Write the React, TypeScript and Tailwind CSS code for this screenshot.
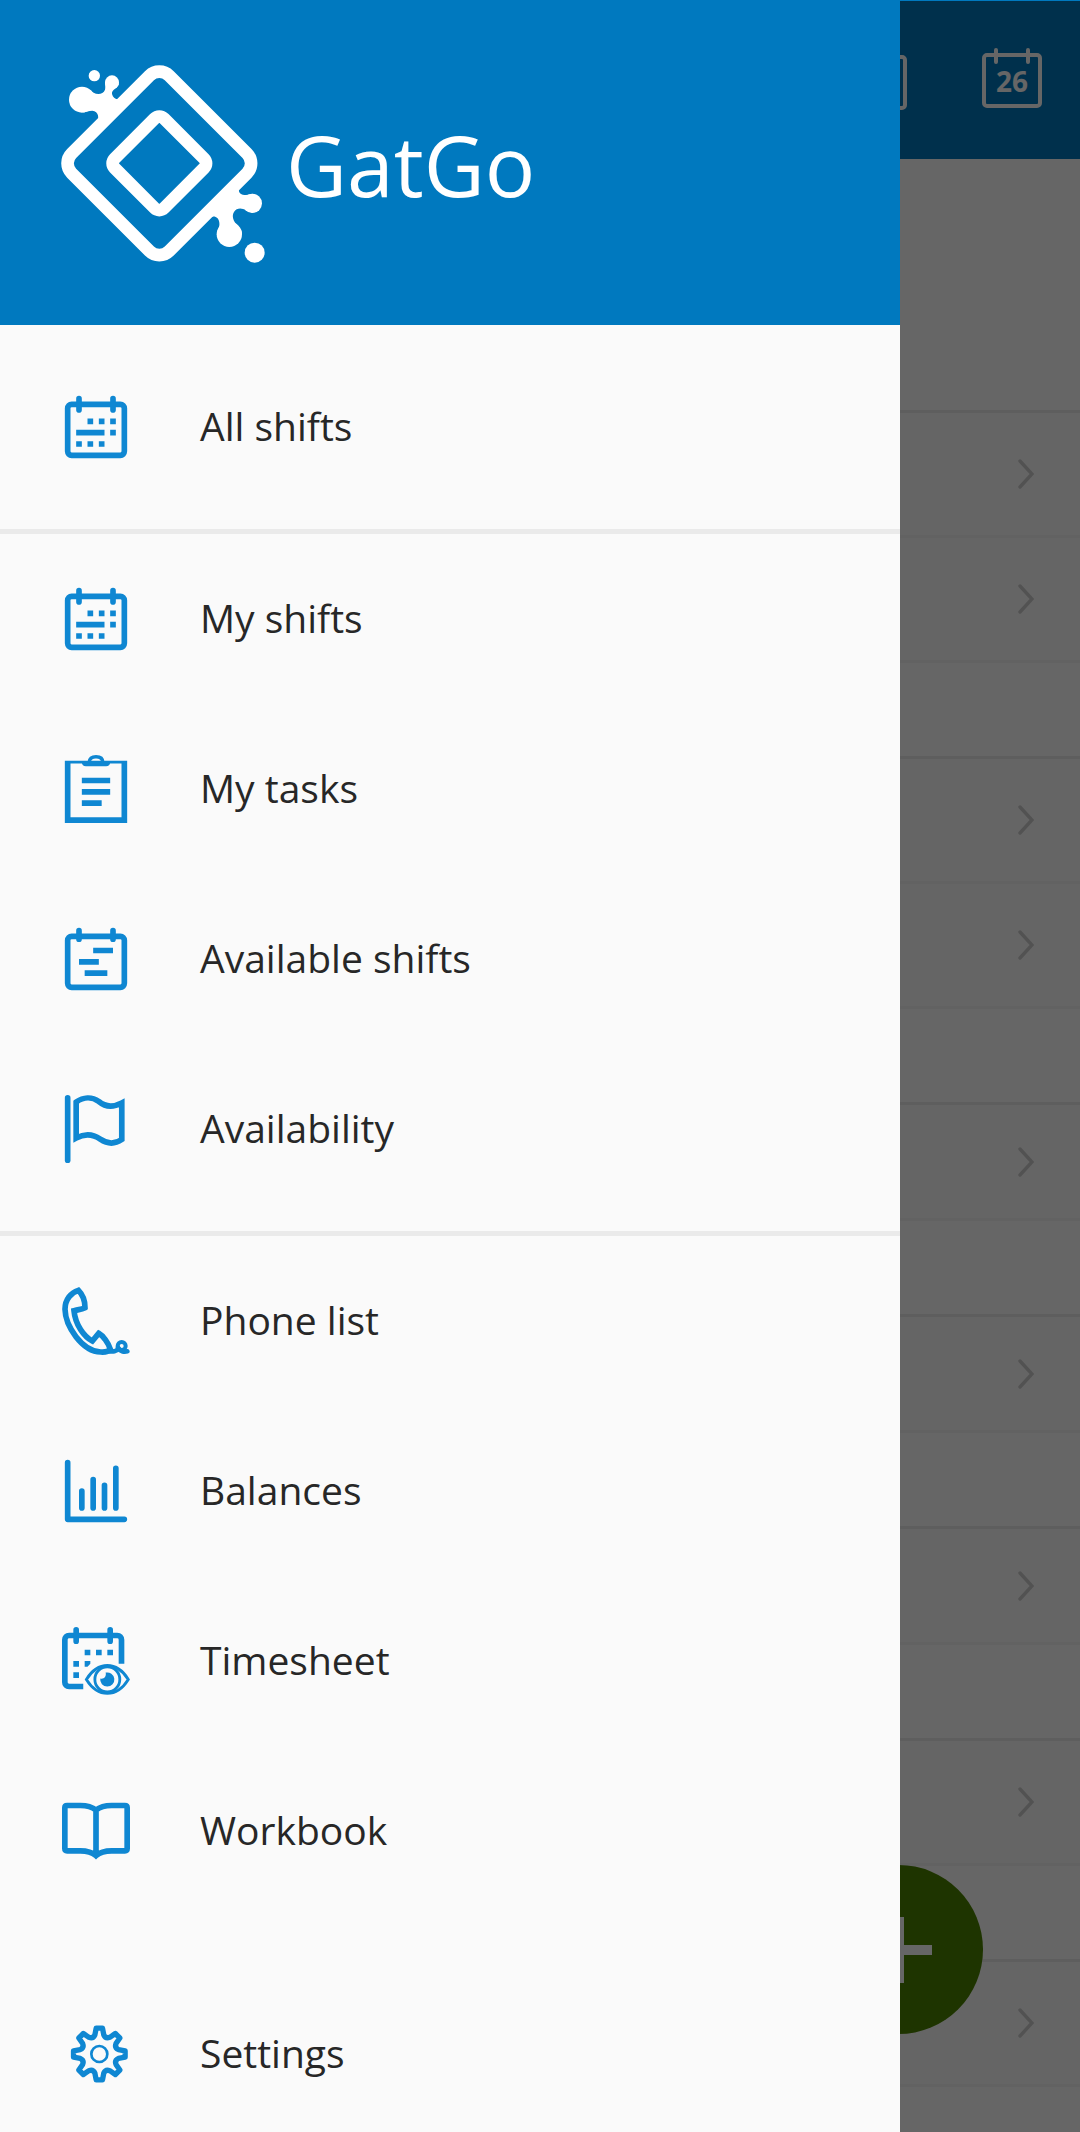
import React from 'react';
import clsx from 'clsx';

interface IconProps {
  className?: string;
}

interface MenuItem {
  label: string;
  icon: (props: IconProps) => React.ReactElement;
}

interface DaySection {
  id: number;
  rows: number;
  tall: boolean;
}

const stroke = {
  fill: 'none',
  stroke: 'currentColor',
  strokeWidth: 2,
};

function CalendarIcon({ className }: IconProps) {
  return (
    <svg viewBox="0 0 24 24" className={className} aria-hidden="true">
      <rect x="2" y="4" width="20" height="18" rx="1.4" {...stroke} />
      <path d="M6 2v4M18 2v4" {...stroke} strokeLinecap="round" />
      <path
        d="M9 9h2v2H9zM13 9h2v2h-2zM17 9h2v2h-2zM5 13h10v2H5zM17 13h2v2h-2zM5 17h2v2H5zM9 17h2v2H9zM13 17h2v2h-2z"
        fill="currentColor"
      />
    </svg>
  );
}

function TasksIcon({ className }: IconProps) {
  return (
    <svg viewBox="0 0 24 24" className={className} aria-hidden="true">
      <path d="M1 2h22v22H1zM3 3v19h18V3z" fill="currentColor" fillRule="evenodd" />
      <path d="M7 2.6h10c0 .9-.6 1.4-1.4 1.4H8.400C7.600 4 7 3.500 7 2.600z" fill="currentColor" />
      <path d="M9.600 2.600C9.600 1.200 10.500 .6 12 .6s2.400.6 2.400 2" {...stroke} strokeWidth={1.2} />
      <path d="M7 8h10v2H7zM7 12h10v2H7zM7 16h7v2H7z" fill="currentColor" />
    </svg>
  );
}

function AvailableIcon({ className }: IconProps) {
  return (
    <svg viewBox="0 0 24 24" className={className} aria-hidden="true">
      <rect x="2" y="4" width="20" height="18" rx="1.4" {...stroke} />
      <path d="M6 2v3M18 2v3" {...stroke} strokeLinecap="round" />
      <path d="M11 8h7v2h-7zM6 12h7v2H6zM8 16h8v2H8z" fill="currentColor" />
    </svg>
  );
}

function FlagIcon({ className }: IconProps) {
  return (
    <svg viewBox="0 0 24 24" className={className} aria-hidden="true">
      <path d="M2 1v22" {...stroke} strokeLinecap="round" />
      <path
        d="M5 2.500C7.500.7 10.500.5 13 2.300 15.500 4.400 18 4.400 21.100 2.800V15.700C18.500 17.500 16 17.300 13.500 15.600 10.800 13.700 8 13.600 5 15.200z"
        {...stroke}
      />
    </svg>
  );
}

function PhoneIcon({ className }: IconProps) {
  return (
    <svg viewBox="18 21 204 204" className={className} aria-hidden="true">
      <path
        d="M67 31C45 38 27 58 27 88C28 138 78 214 134 216C148 217 158 214 163 208C157 188 142 168 128 160L109 183C84 170 58 134 54 92C66 89 78 88 87 83C87 64 80 44 67 31z"
        {...stroke}
        strokeWidth={17}
      />
      <path d="M158 213C170 217 182 213 188 206" {...stroke} strokeWidth={14} />
      <circle cx="197" cy="198" r="12" {...stroke} strokeWidth={12} />
      <path d="M186 203C192 214 204 217 214 214" {...stroke} strokeWidth={14} strokeLinecap="round" />
    </svg>
  );
}

function BalancesIcon({ className }: IconProps) {
  return (
    <svg viewBox="0 0 24 24" className={className} aria-hidden="true">
      <path
        d="M2 2v20h20M7 12v6M11 8v10M15 10v8M19 4v14"
        {...stroke}
        strokeLinecap="round"
        strokeLinejoin="round"
      />
    </svg>
  );
}

function TimesheetIcon({ className }: IconProps) {
  return (
    <svg viewBox="0 0 24 24" className={className} aria-hidden="true">
      <path d="M7.500 21H2.500C1.600 21 1 20.400 1 19.500V4.500C1 3.600 1.600 3 2.500 3h17c.9 0 1.500.6 1.500 1.500V13" {...stroke} />
      <path d="M5 1v4M17 1v4" {...stroke} strokeLinecap="round" />
      <path
        d="M8 8h2v2H8zM12 8h2v2h-2zM16 8h2v2h-2zM4 12h2v2H4zM8 12h2v1l-1 1H8zM4 16h2v2H4z"
        fill="currentColor"
      />
      <path d="M8.600 18.500C10.400 15.600 12.900 13.600 16 13.600s5.600 2 7.400 4.900c-1.800 2.900-4.300 4.900-7.400 4.900s-5.600-2-7.400-4.900z" {...stroke} strokeWidth={1} />
      <circle cx="16" cy="18.500" r="4.400" {...stroke} strokeWidth={1} />
      <path d="M15.400 16.100A2.500 2.500 0 1 1 13.500 18.200C14.600 18.600 15.800 17.600 15.400 16.100z" fill="currentColor" />
    </svg>
  );
}

function WorkbookIcon({ className }: IconProps) {
  return (
    <svg viewBox="0 0 24 24" className={className} aria-hidden="true">
      <path
        d="M12 4.600C10.500 3.400 9 3 6.500 3H1.800C1.300 3 1 3.300 1 3.800V18.200C1 18.700 1.300 19 1.800 19H6.500C9 19 10.500 19.400 12 20.700C13.500 19.400 15 19 17.500 19H22.200C22.700 19 23 18.700 23 18.200V3.800C23 3.300 22.700 3 22.200 3H17.500C15 3 13.500 3.400 12 4.600zM12 4.600V20.700"
        {...stroke}
      />
    </svg>
  );
}

function gearPoint(degrees: number, radius: number) {
  const angle = (degrees * Math.PI) / 180;
  return `${(130 + radius * Math.sin(angle)).toFixed(1)} ${(116 - radius * Math.cos(angle)).toFixed(1)}`;
}

// Eight teeth with a curved valley after each one
const gearPath = Array.from({ length: 8 })
  .map((_, i) => {
    const a = i * 45;
    return [
      `${i === 0 ? 'M' : 'L'}${gearPoint(a - 13, 59)}`,
      `L${gearPoint(a - 7, 78)}`,
      `L${gearPoint(a + 7, 78)}`,
      `L${gearPoint(a + 13, 59)}`,
      `Q${gearPoint(a + 22.5, 49)} ${gearPoint(a + 32, 59)}`,
    ].join('');
  })
  .join('') + 'z';

function SettingsIcon({ className }: IconProps) {
  return (
    <svg viewBox="18 14 204 204" className={className} aria-hidden="true">
      <path d={gearPath} {...stroke} strokeWidth={16} strokeLinejoin="round" />
      <circle cx="130" cy="116" r="24" {...stroke} strokeWidth={8} />
    </svg>
  );
}

function Logo({ className }: IconProps) {
  return (
    <svg viewBox="60 60 630 630" className={className} aria-hidden="true">
      <g {...stroke} strokeWidth={38}>
        <rect x="151" y="163" width="414" height="414" rx="42" transform="rotate(45 358 370)" />
        <rect x="253" y="265" width="210" height="210" rx="20" transform="rotate(45 358 370)" />
      </g>
      <g fill="currentColor">
        <circle cx="163" cy="107" r="17" />
        <circle cx="216" cy="127" r="21" />
        <circle cx="126" cy="179" r="39" />
        <path d="M150 149C160 164 188 168 195 149C197 141 195 136 195 128L237 130C236 145 214 148 216 162C220 178 234 182 244 172L262 172L180 260L168 250C180 238 176 212 157 212C145 212 140 215 130 218z" />
        <circle cx="637" cy="490" r="29" />
        <circle cx="644" cy="638" r="30" />
        <circle cx="568" cy="583" r="38" />
        <path d="M615 423C595 442 592 455 603 462C612 468 620 464 637 461L637 519C620 512 605 500 590 508C576 518 576 532 584 546C592 560 606 565 606 583L531 583C531 570 540 562 538 548C536 530 520 524 504 536L480 520L590 410z" />
      </g>
    </svg>
  );
}

const menuGroups: MenuItem[][] = [
  [{ label: 'All shifts', icon: CalendarIcon }],
  [
    { label: 'My shifts', icon: CalendarIcon },
    { label: 'My tasks', icon: TasksIcon },
    { label: 'Available shifts', icon: AvailableIcon },
    { label: 'Availability', icon: FlagIcon },
  ],
  [
    { label: 'Phone list', icon: PhoneIcon },
    { label: 'Balances', icon: BalancesIcon },
    { label: 'Timesheet', icon: TimesheetIcon },
    { label: 'Workbook', icon: WorkbookIcon },
  ],
];

const daySections: DaySection[] = [
  { id: 1, rows: 2, tall: true },
  { id: 2, rows: 2, tall: true },
  { id: 3, rows: 1, tall: false },
  { id: 4, rows: 1, tall: false },
  { id: 5, rows: 1, tall: false },
  { id: 6, rows: 1, tall: true },
  { id: 7, rows: 1, tall: true },
];

function MenuLink({ label, icon: Icon }: MenuItem) {
  return (
    <a href="#" className="flex h-[170px] items-center gap-[70px] px-[62px]">
      <Icon className="h-[68px] w-[68px] shrink-0 text-[#0f87d2]" />
      <span className="pb-0.5 text-[39px] leading-[54px] text-[#272727]">{label}</span>
    </a>
  );
}

function Drawer() {
  return (
    <aside className="absolute inset-y-0 left-0 flex w-5/6 flex-col overflow-hidden bg-[#fafafa]">
      <header className="flex h-[325px] shrink-0 items-center gap-4 bg-[#0079bf] px-[60px] pt-1 text-white">
        <Logo className="h-[210px] w-[210px] shrink-0" />
        <h1 className="text-[84px] leading-[112px]">GatGo</h1>
      </header>

      <nav className="flex grow flex-col">
        {menuGroups.map((group, index) => (
          <div
            key={group[0].label}
            className={clsx(
              index === 0 && 'pt-[17px]',
              index < menuGroups.length - 1 && 'border-b-[5px] border-[#eaeaea] pb-[17px]'
            )}
          >
            {group.map(item => (
              <MenuLink key={item.label} {...item} />
            ))}
          </div>
        ))}
        <a href="#" className="mt-auto flex h-[156px] items-center gap-[70px] px-[62px]">
          <SettingsIcon className="h-[68px] w-[68px] shrink-0 text-[#0f87d2]" />
          <span className="pb-0.5 text-[39px] leading-[54px] text-[#272727]">Settings</span>
        </a>
      </nav>
    </aside>
  );
}

function ShiftsPage() {
  return (
    <main>
      {/* App bar */}
      <div className="flex h-[159px] items-center justify-end gap-[75px] bg-[#0079bf] pr-[38px] pb-1 text-white">
        <button type="button" aria-label="View" className="pt-1">
          <svg viewBox="0 0 60 60" className="h-[60px] w-[60px]" aria-hidden="true">
            <rect x="2" y="7" width="56" height="51" rx="3" {...stroke} strokeWidth={4} />
          </svg>
        </button>
        <button type="button" aria-label="Today" className="relative">
          <svg viewBox="0 0 60 60" className="h-[60px] w-[60px]" aria-hidden="true">
            <rect x="2" y="7" width="56" height="51" rx="3" {...stroke} strokeWidth={4} />
            <path d="M14 2v12M46 2v12" {...stroke} strokeWidth={4} strokeLinecap="round" />
          </svg>
          <span className="absolute inset-x-0 bottom-[5px] text-center text-[28px] leading-[44px] font-bold">26</span>
        </button>
      </div>

      <div className="h-[251px] bg-white" />

      {daySections.map(section => (
        <section key={section.id}>
          {Array.from({ length: section.rows }).map((_, row) => (
            <div
              key={row}
              className={clsx(
                'flex items-center justify-end border-t-[3px] bg-[#fcfcfc] pr-[46px]',
                section.tall ? 'h-[125px]' : 'h-[116px]',
                row === 0 ? 'border-[#ebebeb]' : 'border-[#f4f4f4]'
              )}
            >
              <svg viewBox="0 0 16 30" className="h-[30px] w-4 text-[#cdcdcd]" aria-hidden="true">
                <path d="M2 2l12 13L2 28" {...stroke} strokeWidth={3.4} strokeLinecap="round" />
              </svg>
            </div>
          ))}
          <div className="h-24 border-t-[3px] border-[#f4f4f4] bg-white" />
        </section>
      ))}

      <button
        type="button"
        aria-label="Add shift"
        className="absolute right-[97px] bottom-[98px] flex h-[169px] w-[169px] items-center justify-center rounded-full bg-[#4b8200] text-white"
      >
        <svg viewBox="0 0 66 66" className="h-[66px] w-[66px]" aria-hidden="true">
          <path d="M33 0v66M0 33h66" {...stroke} strokeWidth={10} />
        </svg>
      </button>
    </main>
  );
}

export default function App() {
  return (
    <div className="relative h-screen overflow-hidden bg-white font-['Open_Sans','Noto_Sans',sans-serif]">
      <ShiftsPage />
      <div className="absolute inset-x-0 top-px bottom-0 bg-black/60" />
      <Drawer />
    </div>
  );
}
